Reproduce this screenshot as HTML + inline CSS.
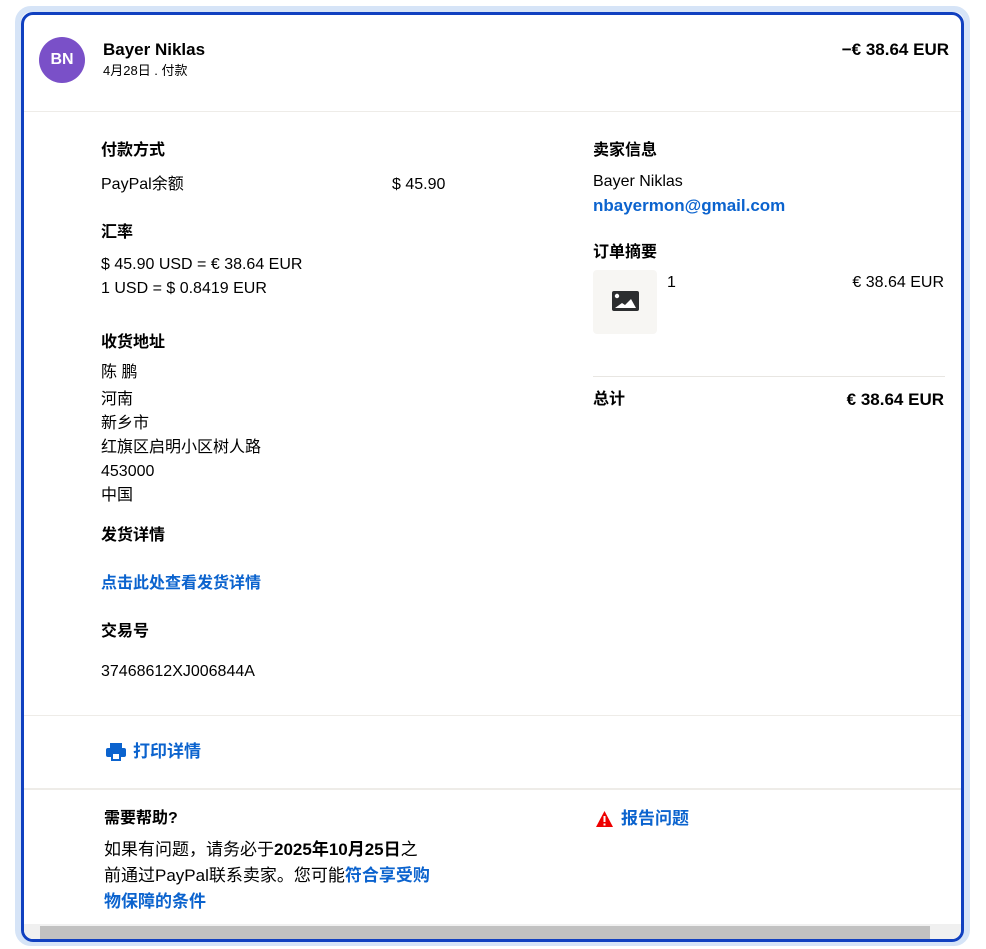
<!DOCTYPE html>
<html><head><meta charset="utf-8"><style>
*{margin:0;padding:0;box-sizing:border-box}
body{width:986px;height:949px;background:#fff;font-family:"Liberation Sans","Noto Sans CJK SC",sans-serif;color:#000;position:relative;overflow:hidden}
.outer{position:absolute;left:15px;top:6px;width:955px;height:940px;border:6px solid #d6e4f7;border-radius:16px}
.frame{position:absolute;left:21px;top:12px;width:943px;height:930px;border:3px solid #1040c0;border-radius:12px;overflow:hidden;background:#fff}
.a{position:absolute;white-space:nowrap;font-size:16px;line-height:24px}
.b{font-weight:bold}
.l{color:#0b63ce;font-weight:bold}
.hr{position:absolute;left:0;width:943px;height:2px;background:#eeece8}
</style></head><body>
<div class="outer"></div>
<div class="frame">
<div style="position:absolute;left:15px;top:22px;width:46px;height:46px;border-radius:50%;background:#7a50c8;color:#fff;font-weight:bold;font-size:16px;line-height:46px;text-align:center">BN</div>
<div class="a b" style="left:79px;top:23px;font-size:17px">Bayer Niklas</div>
<div class="a" style="left:79px;top:47px;font-size:13px;line-height:18px">4月28日 . 付款</div>
<div class="a b" style="right:12px;top:23px;font-size:17px">−€ 38.64 EUR</div>
<div class="hr" style="top:96px;height:1px"></div>

<div class="a b" style="left:77px;top:124px">付款方式</div>
<div class="a" style="left:77px;top:158px">PayPal余额</div>
<div class="a" style="left:368px;top:158px">$ 45.90</div>
<div class="a b" style="left:77px;top:206px">汇率</div>
<div class="a" style="left:77px;top:238px">$ 45.90 USD = € 38.64 EUR</div>
<div class="a" style="left:77px;top:262px">1 USD = $ 0.8419 EUR</div>
<div class="a b" style="left:77px;top:316px">收货地址</div>
<div class="a" style="left:77px;top:346px">陈 鹏</div>
<div class="a" style="left:77px;top:373px">河南</div>
<div class="a" style="left:77px;top:397px">新乡市</div>
<div class="a" style="left:77px;top:421px">红旗区启明小区树人路</div>
<div class="a" style="left:77px;top:445px">453000</div>
<div class="a" style="left:77px;top:469px">中国</div>
<div class="a b" style="left:77px;top:509px">发货详情</div>
<div class="a l" style="left:77px;top:557px">点击此处查看发货详情</div>
<div class="a b" style="left:77px;top:605px">交易号</div>
<div class="a" style="left:77px;top:645px">37468612XJ006844A</div>

<div class="a b" style="left:569px;top:124px">卖家信息</div>
<div class="a" style="left:569px;top:155px">Bayer Niklas</div>
<div class="a l" style="left:569px;top:179px;font-size:17px">nbayermon@gmail.com</div>
<div class="a b" style="left:569px;top:226px">订单摘要</div>
<div style="position:absolute;left:569px;top:255px;width:64px;height:64px;background:#f7f6f3;border-radius:4px"></div>
<svg style="position:absolute;left:588px;top:276px" width="27" height="20" viewBox="0 0 27 20"><rect x="0" y="0" width="27" height="20" rx="2" fill="#2c2e2f"/><circle cx="5" cy="5" r="2.2" fill="#fff"/><path d="M3 17 L10 12 L13 14 L19 8 L24 17Z" fill="#fff"/></svg>
<div class="a" style="left:643px;top:256px">1</div>
<div class="a" style="right:17px;top:256px">€ 38.64 EUR</div>
<div style="position:absolute;left:569px;top:361px;width:352px;height:1px;background:#e8e6e2"></div>
<div class="a b" style="left:569px;top:373px">总计</div>
<div class="a b" style="right:17px;top:373px;font-size:17px">€ 38.64 EUR</div>

<div class="hr" style="top:700px;height:1px"></div>
<svg style="position:absolute;left:82px;top:728px" width="20" height="18" viewBox="0 0 20 18"><rect x="4" y="0" width="12" height="5" fill="#0b63ce"/><rect x="0" y="5" width="20" height="9" rx="2" fill="#0b63ce"/><rect x="5" y="10" width="10" height="8" fill="#0b63ce"/><rect x="7" y="11" width="6" height="5" fill="#fff"/></svg>
<div class="a l" style="left:109px;top:725px;font-size:17px">打印详情</div>
<div class="hr" style="top:773px"></div>

<div class="a b" style="left:80px;top:792px">需要帮助?</div>
<svg style="position:absolute;left:572px;top:796px" width="17" height="16" viewBox="0 0 17 16"><path d="M8.5 0 L17 16 L0 16Z" fill="#e00"/><rect x="7.5" y="5" width="2" height="6" fill="#fff"/><rect x="7.5" y="12.5" width="2" height="2" fill="#fff"/></svg>
<div class="a l" style="left:597px;top:792px;font-size:17px">报告问题</div>
<div class="a" style="left:80px;top:822px;font-size:17px;line-height:26px;white-space:normal;width:350px">如果有问题，请务必于<b>2025年10月25日</b>之<br>前通过PayPal联系卖家。您可能<span class="l">符合享受购<br>物保障的条件</span></div>

<div style="position:absolute;left:0;top:909px;width:943px;height:16px;background:#f0f0f0"></div>
<div style="position:absolute;left:16px;top:911px;width:890px;height:13px;background:#c1c1c1"></div>
</div>
</body></html>
